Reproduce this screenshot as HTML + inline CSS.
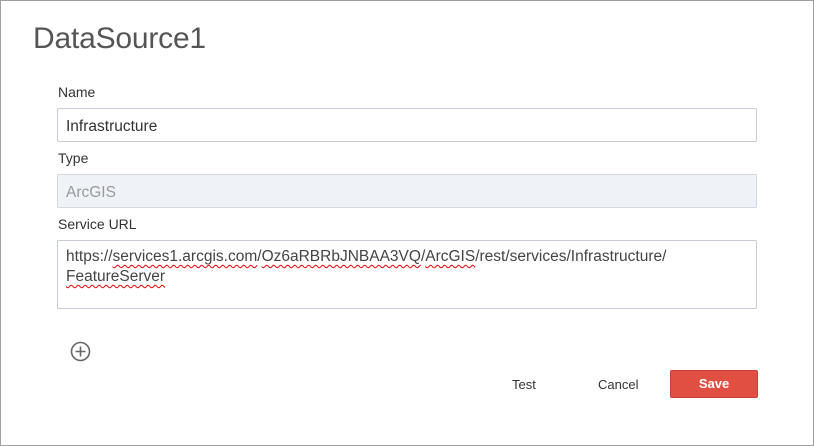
<!DOCTYPE html>
<html><head><style>
body{margin:0;width:814px;height:446px;overflow:hidden;font-family:"Liberation Sans",sans-serif;background:#fff}
.frame{position:absolute;left:0;top:0;width:812px;height:444px;border:1px solid #a0a0a0}
.a{position:absolute}
h1{position:absolute;left:33px;top:22px;margin:0;font-weight:normal;font-size:30px;color:#555;letter-spacing:-0.2px}
.lbl{position:absolute;left:58px;font-size:14px;color:#333}
.box{position:absolute;left:57px;width:700px;border:1px solid #c8ccd4;border-radius:2px;font-size:15.5px;color:#333;box-sizing:border-box;padding-left:8px}
.sq{text-decoration:underline wavy #e00;text-decoration-thickness:1px;text-underline-offset:3px}
</style></head><body>
<div class="frame"></div>
<h1>DataSource1</h1>
<div class="lbl" style="top:84px">Name</div>
<div class="box" style="top:108px;height:34px;line-height:36px">Infrastructure</div>
<div class="lbl" style="top:150px">Type</div>
<div class="box" style="top:174px;height:34px;line-height:36px;background:#eff3f7;color:#999;border-color:#d4d8de">ArcGIS</div>
<div class="lbl" style="top:216px">Service URL</div>
<div class="box" style="top:240px;height:69px;padding-top:6px;line-height:20px;color:#444">https://<span class="sq">services1.arcgis.com</span>/<span class="sq">Oz6aRBRbJNBAA3VQ</span>/<span class="sq">ArcGIS</span>/rest/services/Infrastructure/<br><span class="sq">FeatureServer</span></div>
<svg class="a" style="left:70px;top:341px" width="21" height="21" viewBox="0 0 21 21"><circle cx="10.5" cy="10.5" r="9" fill="none" stroke="#666" stroke-width="1.6"/><path d="M10.5 5.5v10M5.5 10.5h10" stroke="#666" stroke-width="1.6"/></svg>
<div class="a" style="left:512px;top:377px;font-size:13px;color:#333">Test</div>
<div class="a" style="left:598px;top:377px;font-size:13px;color:#333">Cancel</div>
<div class="a" style="left:670px;top:370px;width:88px;height:28px;background:#e04f42;border:1px solid #c9413a;border-radius:2px;box-sizing:border-box;color:#fff;font-weight:bold;font-size:13px;text-align:center;line-height:26px">Save</div>
</body></html>
